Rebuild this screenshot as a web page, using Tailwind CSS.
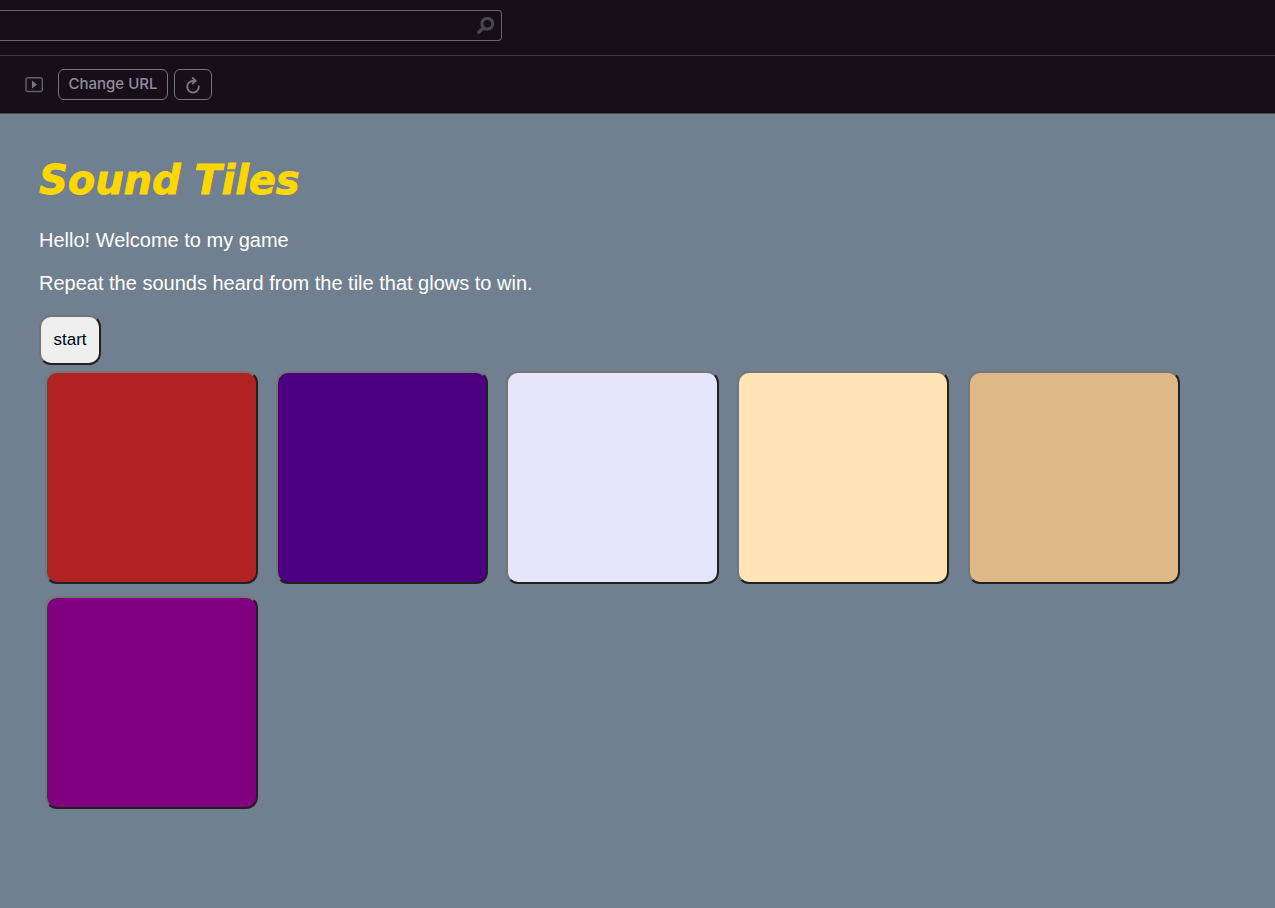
<!DOCTYPE html>
<html lang="en">
<head>
<meta charset="utf-8">
<title>Sound Tiles</title>
<script src="https://cdn.jsdelivr.net/npm/@tailwindcss/browser@4"></script>
</head>
<body class="h-[908px] overflow-hidden bg-[#708090] font-['Liberation_Sans',Arial,sans-serif] text-white">
<header class="bg-[#160e18]">
  <div class="h-14 border-b border-[#3e3a40] pt-[10px]">
    <div class="flex h-[31px] w-[502px] items-center justify-end rounded-r-[4px] border border-l-0 border-[#69656a] pr-[6px]">
      <svg class="size-[18px]" viewBox="0 0 18 18" fill="none" stroke="#4a464b"><circle cx="10.3" cy="6.8" r="5.4" stroke-width="3.2"/><path d="M6.6 10.6 1.9 15.3" stroke-width="3.4" stroke-linecap="round"/></svg>
    </div>
  </div>
  <div class="flex h-[58px] items-start border-b border-[#48484f] pt-[13px] pl-[25px]">
    <svg class="mt-2 mr-[15px] h-4 w-[18px]" viewBox="0 0 18 16"><rect x="1" y=".8" width="16.4" height="13.6" rx="2" fill="none" stroke="#625e62" stroke-width="1.5"/><path d="M7 3.6 12 7.6 7 11.6z" fill="#77777b"/></svg>
    <button class="h-[31px] w-[110px] rounded-[6px] border border-[#767676] pb-[2px] font-['Inter',sans-serif] text-[15px] leading-none font-medium whitespace-nowrap text-[#918c9b]">Change URL</button>
    <button class="ml-[6px] flex h-[31px] w-[38px] items-center justify-center rounded-[6px] border border-[#767676]" aria-label="Reload">
      <svg class="mt-[2px] h-[18px] w-4" viewBox="0 0 16 18" fill="none" stroke="#7c7a7c" stroke-width="1.9"><path d="M10.4 4H8A5.8 5.8 0 1 0 13.8 9.8V8.4"/><path d="M7.2 .4 10.6 3.8 7.2 7.2"/></svg>
    </button>
  </div>
</header>
<main class="pt-[41px] pl-[39px]">
  <h1 class="h-[50px] font-['DejaVu_Sans',Verdana,sans-serif] text-[40px] leading-[50px] font-bold tracking-[-0.08px] text-[#ffd700] italic [-webkit-text-stroke:0.8px_#ffd700]">Sound Tiles</h1>
  <p class="mt-6 text-[20px] leading-[23px]">Hello! Welcome to my game</p>
  <p class="mt-5 text-[20px] leading-[23px]">Repeat the sounds heard from the tile that glows to win.</p>
  <button class="mt-5 block h-[50px] w-[62px] rounded-[12px] border-2 border-[#767676] border-r-[#212121] border-b-[#212121] bg-[#efefef] text-[17px] text-black">start</button>
  <div class="mt-[6px] ml-[6.1px] flex flex-wrap gap-x-[18.22px] gap-y-[12.5px]">
    <button class="h-[212.5px] w-[212.43px] rounded-[12px] border-2 border-[#767676] border-r-[#212121] border-b-[#212121] bg-[#b22222]"></button>
    <button class="h-[212.5px] w-[212.43px] rounded-[12px] border-2 border-[#767676] border-r-[#212121] border-b-[#212121] bg-[#4b0082]"></button>
    <button class="h-[212.5px] w-[212.43px] rounded-[12px] border-2 border-[#767676] border-r-[#212121] border-b-[#212121] bg-[#e6e6fa]"></button>
    <button class="h-[212.5px] w-[212.43px] rounded-[12px] border-2 border-[#767676] border-r-[#212121] border-b-[#212121] bg-[#ffe4b5]"></button>
    <button class="h-[212.5px] w-[212.43px] rounded-[12px] border-2 border-[#767676] border-r-[#212121] border-b-[#212121] bg-[#deb887]"></button>
    <button class="h-[212.5px] w-[212.43px] rounded-[12px] border-2 border-[#767676] border-r-[#212121] border-b-[#212121] bg-[#800080]"></button>
  </div>
</main>
</body>
</html>
